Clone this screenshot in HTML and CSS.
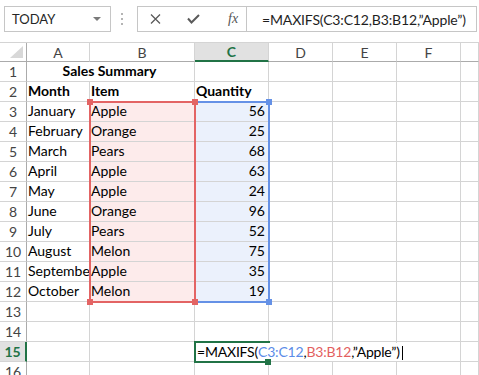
FILE: index.html
```html
<!DOCTYPE html>
<html lang="en">
<head>
<meta charset="UTF-8">
<meta name="viewport" content="width=device-width, initial-scale=1.0">
<title>MAXIFS example</title>
<link rel="stylesheet" href="styles.css">
</head>
<body>

<div class="toolbar">
    <div class="namebox">
        <span>TODAY</span>
        <svg width="8" height="5" viewBox="0 0 8 5"><polygon points="0,0 8,0 4,4" fill="#7a7a7a"/></svg>
    </div>
    <div class="grip"><i></i><i></i><i></i></div>
    <div class="fxbox">
        <svg class="ico-x" width="11" height="10" viewBox="0 0 11 10"><path d="M1 0.5 L10 9.5 M10 0.5 L1 9.5" stroke="#5a5a5a" stroke-width="1.3" fill="none"/></svg>
        <svg class="ico-ok" width="13" height="10" viewBox="0 0 13 10"><path d="M1 4.5 L4.5 8.5 L12 1" stroke="#5a5a5a" stroke-width="2" fill="none"/></svg>
        <span class="fx">fx</span>
    </div>
    <div class="formula">=MAXIFS(C3:C12,B3:B12,”Apple”)</div>
</div>

<div class="sheet">
    <!-- column headers -->
    <div class="hd corner"><svg width="13" height="12" viewBox="0 0 13 12"><polygon points="13,0 13,12 0,12" fill="#d8d8d8"/></svg></div>
    <div class="hd">A</div><div class="hd">B</div><div class="hd sel">C</div><div class="hd">D</div><div class="hd">E</div><div class="hd">F</div><div class="hd"></div>

    <div class="rh">1</div><div class="b title">Sales Summary</div><div></div><div></div><div></div><div></div><div></div>
    <div class="rh">2</div><div class="b">Month</div><div class="b">Item</div><div class="b">Quantity</div><div></div><div></div><div></div><div></div>
    <div class="rh">3</div><div>January</div><div class="in-b">Apple</div><div class="in-c num">56</div><div></div><div></div><div></div><div></div>
    <div class="rh">4</div><div>February</div><div class="in-b">Orange</div><div class="in-c num">25</div><div></div><div></div><div></div><div></div>
    <div class="rh">5</div><div>March</div><div class="in-b">Pears</div><div class="in-c num">68</div><div></div><div></div><div></div><div></div>
    <div class="rh">6</div><div>April</div><div class="in-b">Apple</div><div class="in-c num">63</div><div></div><div></div><div></div><div></div>
    <div class="rh">7</div><div>May</div><div class="in-b">Apple</div><div class="in-c num">24</div><div></div><div></div><div></div><div></div>
    <div class="rh">8</div><div>June</div><div class="in-b">Orange</div><div class="in-c num">96</div><div></div><div></div><div></div><div></div>
    <div class="rh">9</div><div>July</div><div class="in-b">Pears</div><div class="in-c num">52</div><div></div><div></div><div></div><div></div>
    <div class="rh">10</div><div>August</div><div class="in-b">Melon</div><div class="in-c num">75</div><div></div><div></div><div></div><div></div>
    <div class="rh">11</div><div>September</div><div class="in-b">Apple</div><div class="in-c num">35</div><div></div><div></div><div></div><div></div>
    <div class="rh">12</div><div>October</div><div class="in-b">Melon</div><div class="in-c num">19</div><div></div><div></div><div></div><div></div>
    <div class="rh">13</div><div></div><div></div><div></div><div></div><div></div><div></div><div></div>
    <div class="rh">14</div><div></div><div></div><div></div><div></div><div></div><div></div><div></div>
    <div class="rh sel">15</div><div></div><div></div><div></div><div></div><div></div><div></div><div></div>
    <div class="rh">16</div><div></div><div></div><div></div><div></div><div></div><div></div><div></div>

    <!-- range finder outlines -->
    <div class="range blue"></div>
    <div class="handle blue h-blue-top"></div>
    <div class="handle blue h-blue-bot"></div>
    <div class="range red"></div>
    <div class="handle red h-red-tl"></div>
    <div class="handle red h-red-tr"></div>
    <div class="handle red h-red-bl"></div>
    <div class="handle red h-red-br"></div>

    <!-- active cell C15 being edited -->
    <div class="edit">=MAXIFS(<span class="ref-c">C3:C12</span>,<span class="ref-b">B3:B12</span>,”Apple”)<span class="caret"></span></div>
    <div class="active"></div>
    <div class="fill-handle"></div>
</div>

</body>
</html>
```

FILE: styles.css
```css
body {
    margin: 0;
    width: 479px;
    height: 375px;
    overflow: hidden;
    font-family: Lato, "Open Sans", sans-serif;
    background-color: #fff;
    color: #000;
}

/* formula bar */
.toolbar {
    height: 43px;
    box-sizing: border-box;
    padding-top: 6px;
    border-bottom: 1px solid #d4d4d4;
    display: flex;
    align-items: flex-start;
}
.namebox {
    margin-left: 4px;
    width: 107px;
    height: 26px;
    box-sizing: border-box;
    border: 1px solid #c6c6c6;
    display: flex;
    align-items: center;
    justify-content: space-between;
    padding: 0 9px 0 7px;
    font-size: 13px;
    color: #262626;
}
.grip {
    width: 2px;
    height: 26px;
    margin: 0 14px 0 10px;
    display: flex;
    flex-direction: column;
    justify-content: center;
    gap: 3px;
}
.grip i {
    display: block;
    width: 2px;
    height: 2px;
    background-color: #b4b4b4;
}
.fxbox {
    width: 110px;
    height: 26px;
    box-sizing: border-box;
    border: 1px solid #c6c6c6;
    display: flex;
    align-items: center;
    padding-left: 12px;
}
.ico-x {
    margin-right: 26px;
}
.ico-ok {
    margin-right: 28px;
}
.fx {
    font-family: "Liberation Serif", serif;
    font-style: italic;
    font-size: 14px;
    color: #555;
}
.formula {
    width: 230px;
    height: 26px;
    box-sizing: border-box;
    border: 1px solid #c6c6c6;
    border-left: none;
    padding-left: 15px;
    display: flex;
    align-items: center;
    font-size: 14px;
    letter-spacing: -0.15px;
    color: #1e1e1e;
    white-space: nowrap;
}

/* grid */
.sheet {
    position: relative;
    display: grid;
    grid-template-columns: 27px 63px 105px 74px 64px 64px 64px 1fr;
    grid-template-rows: 19px;
    grid-auto-rows: 20px;
    font-size: 14px;
}
.sheet > div {
    box-sizing: border-box;
    border-right: 1px solid #d4d4d4;
    border-bottom: 1px solid #d4d4d4;
    padding: 0 3px 2px 1px;
    display: flex;
    align-items: flex-end;
    white-space: nowrap;
    overflow: hidden;
    line-height: 17px;
}
.sheet > .hd {
    justify-content: center;
    align-items: center;
    padding: 0;
    color: #444;
    border-bottom-color: #ababab;
}
.sheet > .corner {
    justify-content: flex-end;
    align-items: flex-end;
    padding: 0 3px 3px 0;
    border-right-color: #ababab;
}
.sheet > .rh {
    justify-content: center;
    align-items: center;
    padding: 0;
    color: #444;
    border-right-color: #ababab;
}
.sheet > .sel {
    background-color: #e1e1e1;
    color: #217346;
    font-weight: 700;
}
.sheet > .hd.sel {
    border-bottom: 2px solid #217346;
}
.sheet > .rh.sel {
    border-right: 2px solid #217346;
}
.b {
    font-weight: 700;
}
.sheet > .title {
    grid-column: span 2;
    justify-content: center;
}
.sheet > .num {
    justify-content: flex-end;
}
.sheet > .in-b {
    background-color: #fdebeb;
}
.sheet > .in-c {
    background-color: #ebf1fc;
}

/* range finder */
.sheet > .range {
    position: absolute;
    top: 58px;
    height: 202px;
    padding: 0;
    border: 2px solid;
}
.sheet > .range.red {
    left: 89px;
    width: 107px;
    border-color: #e36464;
}
.sheet > .range.blue {
    left: 194px;
    width: 76px;
    border-color: #6591e6;
}
.sheet > .handle {
    position: absolute;
    width: 6px;
    height: 6px;
    padding: 0;
    border: none;
}
.sheet > .handle.red {
    background-color: #e36464;
}
.sheet > .handle.blue {
    background-color: #6591e6;
}
.h-red-tl { left: 87px; top: 56px; }
.h-red-tr { left: 192px; top: 56px; }
.h-red-bl { left: 87px; top: 256px; }
.h-red-br { left: 192px; top: 256px; }
.h-blue-top { left: 266px; top: 56px; }
.h-blue-bot { left: 266px; top: 256px; }

/* editing cell */
.sheet > .edit {
    position: absolute;
    left: 196px;
    top: 300px;
    height: 18px;
    border: none;
    padding: 0 3px 1px 1px;
    background-color: #fff;
    color: #000;
    letter-spacing: -0.2px;
}
.ref-c {
    color: #5b8ce8;
}
.ref-b {
    color: #e35f5f;
}
.caret {
    display: inline-block;
    width: 1px;
    height: 14px;
    margin-left: 2px;
    background-color: #000;
}
.sheet > .active {
    position: absolute;
    left: 194px;
    top: 298px;
    width: 76px;
    height: 22px;
    padding: 0;
    border: 2px solid #217346;
    border-right: none;
}
.sheet > .fill-handle {
    position: absolute;
    left: 265px;
    top: 316px;
    width: 6px;
    height: 6px;
    padding: 0;
    border: none;
    background-color: #217346;
}
```
